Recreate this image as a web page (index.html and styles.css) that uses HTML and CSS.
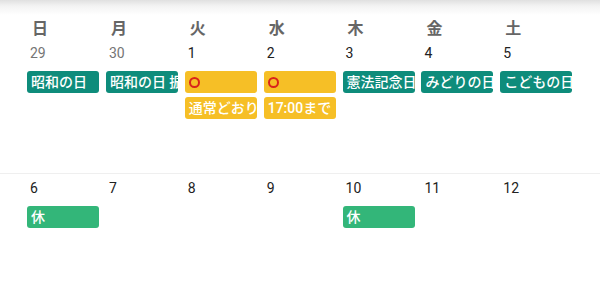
FILE: index.html
```html
<!DOCTYPE html>
<html lang="ja">
<head>
<meta charset="utf-8">
<link rel="stylesheet" href="styles.css">
</head>
<body>
<div class="cal">
  <div class="head">
    <div class="dow">日</div>
    <div class="dow">月</div>
    <div class="dow">火</div>
    <div class="dow">水</div>
    <div class="dow">木</div>
    <div class="dow">金</div>
    <div class="dow">土</div>
  </div>
  <div class="week week-first">
    <div class="day">
      <div class="date muted">29</div>
      <div class="chip teal">昭和の日</div>
    </div>
    <div class="day">
      <div class="date muted">30</div>
      <div class="chip teal">昭和の日 振替休日</div>
    </div>
    <div class="day">
      <div class="date">1</div>
      <div class="chip yellow"><span class="ring" aria-label="〇"></span></div>
      <div class="chip yellow">通常どおり営業</div>
    </div>
    <div class="day">
      <div class="date">2</div>
      <div class="chip yellow"><span class="ring" aria-label="〇"></span></div>
      <div class="chip yellow">17:00まで</div>
    </div>
    <div class="day">
      <div class="date">3</div>
      <div class="chip teal">憲法記念日</div>
    </div>
    <div class="day">
      <div class="date">4</div>
      <div class="chip teal">みどりの日</div>
    </div>
    <div class="day">
      <div class="date">5</div>
      <div class="chip teal">こどもの日</div>
    </div>
  </div>
  <div class="week week-second">
    <div class="day">
      <div class="date">6</div>
      <div class="chip green">休</div>
    </div>
    <div class="day"><div class="date">7</div></div>
    <div class="day"><div class="date">8</div></div>
    <div class="day"><div class="date">9</div></div>
    <div class="day">
      <div class="date">10</div>
      <div class="chip green">休</div>
    </div>
    <div class="day"><div class="date">11</div></div>
    <div class="day"><div class="date">12</div></div>
  </div>
</div>
</body>
</html>
```
FILE: styles.css
```css
html, body {
  margin: 0;
  padding: 0;
  background: #ffffff;
}
body {
  width: 600px;
  height: 304px;
  overflow: hidden;
  font-family: Roboto, "Noto Sans CJK JP", sans-serif;
}
.cal {
  display: flex;
  flex-direction: column;
}
.head {
  display: grid;
  grid-template-columns: repeat(7, 78.9px);
  padding: 18px 0 0 27px;
  height: 18px;
  background: linear-gradient(to bottom, #e0e0e0 0px, #f3f3f3 6px, #ffffff 15px);
}
.dow {
  font-family: "Noto Sans CJK JP", sans-serif;
  font-size: 16px;
  line-height: 18px;
  font-weight: 700;
  color: #666666;
  padding-left: 5px;
}
.week {
  display: grid;
  grid-template-columns: repeat(7, 78.9px);
  padding-left: 27px;
}
.week-first {
  height: 129px;
  padding-top: 8px;
}
.week-second {
  border-top: 1px solid #efefef;
  padding-top: 5px;
  height: 126px;
}
.day {
  display: flex;
  flex-direction: column;
  gap: 4px;
  min-width: 0;
}
.date {
  font-size: 14px;
  line-height: 18px;
  color: #212121;
  padding-left: 3px;
  margin-bottom: 5px;
}
.date.muted {
  color: #757575;
}
.chip {
  width: 72px;
  height: 22px;
  box-sizing: border-box;
  border-radius: 3px;
  padding-left: 4px;
  font-family: Roboto, "Noto Sans CJK JP", sans-serif;
  font-size: 14px;
  font-weight: 500;
  line-height: 22px;
  color: #ffffff;
  white-space: nowrap;
  overflow: hidden;
  display: flex;
  align-items: center;
}
.teal { background: #0e8c7b; }
.yellow { background: #f6bf26; }
.green { background: #33b679; }
.ring {
  display: inline-block;
  width: 11px;
  height: 11px;
  box-sizing: border-box;
  border: 2px solid #d9241a;
  border-radius: 50%;
}
```
